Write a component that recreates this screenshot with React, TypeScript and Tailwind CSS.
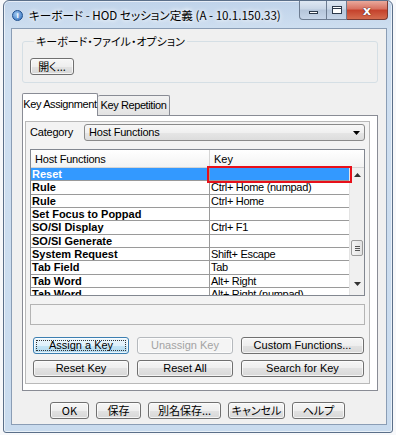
import React from "react";

const sans = "font-['Liberation_Sans','Noto_Sans_CJK_JP',sans-serif]";
const jp = "font-['Noto_Sans_CJK_JP',sans-serif] [font-feature-settings:'palt']";

function Btn({
  children,
  className = "",
  disabled,
  focused,
}: {
  children: React.ReactNode;
  className?: string;
  disabled?: boolean;
  focused?: boolean;
}) {
  const look = disabled
    ? "border-[#b5b9bd] bg-[#f4f4f4] text-[#a3a3a3]"
    : focused
    ? "border-[#3c7fb1] bg-[linear-gradient(#eaf6fd_0%,#dff1fb_50%,#c4e5f6_50%,#b2d9ef_100%)] text-black"
    : "border-[#707070] bg-[linear-gradient(#f6f6f6_0%,#eeeeee_50%,#e2e2e2_50%,#d8d8d8_100%)] text-black";
  return (
    <div
      className={`relative flex h-[17px] shrink-0 items-center justify-center whitespace-nowrap rounded-[3px] border text-[11px] leading-none shadow-[inset_0_0_0_1px_rgba(255,255,255,0.7)] ${look} ${className}`}
    >
      {focused && (
        <div className="absolute inset-[2px] border border-dotted border-[#333]" />
      )}
      <span className="relative">{children}</span>
    </div>
  );
}

const rows: [string, string][] = [
  ["Reset", ""],
  ["Rule", "Ctrl+ Home (numpad)"],
  ["Rule", "Ctrl+ Home"],
  ["Set Focus to Poppad", ""],
  ["SO/SI Display", "Ctrl+ F1"],
  ["SO/SI Generate", ""],
  ["System Request", "Shift+ Escape"],
  ["Tab Field", "Tab"],
  ["Tab Word", "Alt+ Right"],
  ["Tab Word", "Alt+ Right (numpad)"],
];

function TitleButtons() {
  return (
    <div className="flex h-[19px] items-stretch">
      <div className="flex w-[48px] overflow-hidden rounded-bl-[4px] border border-t-0 border-[#6d7c91] bg-[linear-gradient(#dfe8f3_0%,#c9d6e6_45%,#b5c5da_50%,#c6d5e8_100%)]">
        <div className="flex w-[27px] items-end justify-center border-r border-[#6d7c91] pb-[5px]">
          <div className="h-[3px] w-[9px] border border-[#2d3a4b] bg-white" />
        </div>
        <div className="flex flex-1 items-center justify-center">
          <div className="h-[8px] w-[10px] border border-[#2d3a4b] bg-white">
            <div className="mt-[1px] h-px bg-[#2d3a4b]" />
          </div>
        </div>
      </div>
      <div className="flex w-[41px] items-center justify-center rounded-br-[4px] border border-l-0 border-t-0 border-[#7a3b33] bg-[linear-gradient(#e9a99c_0%,#d7705f_45%,#c4412b_50%,#d46c4f_100%)]">
        <span className="text-[13px] font-bold leading-none text-white [text-shadow:0_0_1px_#401010,0_0_1px_#401010] font-['DejaVu_Sans',sans-serif]">
          x
        </span>
      </div>
    </div>
  );
}

export default function App() {
  return (
    <div className={`h-[435px] w-[396px] overflow-hidden bg-[#f7f8fa] ${sans}`}>
      <div className="ml-[3px] flex h-[433px] w-[390px] flex-col rounded-t-[6px] rounded-b-[3px] border border-[#5b6f89] bg-[linear-gradient(180deg,#c0d3ea_0px,#cfdff0_30px,#c9dbee_100%)] shadow-[inset_0_0_0_1px_rgba(255,255,255,0.6)]">
        {/* Title bar */}
        <div className="flex h-[27px] shrink-0 items-start">
          <div className="mt-[9px] ml-[8px] flex h-[11px] w-[11px] items-center justify-center rounded-full border border-[#1d4f8e] bg-[radial-gradient(circle_at_40%_35%,#9fc6ee,#2f6fc0)]">
            <span className="text-[8px] font-bold leading-none text-white">i</span>
          </div>
          <div
            className={`mt-[6px] ml-[6px] flex-1 whitespace-nowrap text-[11.6px] leading-[16px] text-black [text-shadow:0_0_6px_#fff,0_0_4px_#fff] ${jp}`}
          >
            キーボード - HOD セッション定義 (A - 10.1.150.33)
          </div>
          <div className="mr-[4px]">
            <TitleButtons />
          </div>
        </div>

        {/* Client area */}
        <div className="ml-[7px] flex h-[397px] w-[376px] flex-col border border-[#8a9db5] bg-[#f0f0f0] px-[10px] pt-[5px]">
          {/* Group box */}
          <fieldset className="h-[49px] w-[356px] rounded-[3px] border border-[#d5dfe5] px-[7px]">
            <legend className={`ml-[4px] px-[2px] text-[11px] leading-[14px] text-black ${jp}`}>
              キーボード・ファイル・オプション
            </legend>
            <div className="mt-[10px]">
              <Btn className={`w-[44px] ${jp}`}>開く...</Btn>
            </div>
          </fieldset>

          {/* Tabs */}
          <div className="mt-[10px] flex h-[22px] items-end">
            <div className="relative z-10 -mb-px flex h-[23px] w-[76px] items-start justify-center whitespace-nowrap rounded-t-[2px] border border-b-0 border-[#898c95] bg-white pt-[5px] text-[11px] leading-none tracking-[-0.4px]">
              Key Assignment
            </div>
            <div className="flex h-[20px] w-[72px] items-start justify-center whitespace-nowrap rounded-t-[2px] border border-b-0 border-l-0 border-[#898c95] bg-[linear-gradient(#f2f2f2,#e3e3e3)] pt-[4px] text-[11px] leading-none tracking-[-0.4px]">
              Key Repetition
            </div>
          </div>

          {/* Tab panel */}
          <div className="h-[276px] w-[356px] border border-[#898c95] bg-white pt-[5px] pr-[7px] pb-[6px] pl-[2px]">
            <div className="flex h-full flex-col border border-[#b9b9b9] bg-[#f3f3f3] pl-[4px]">
              {/* Category */}
              <div className="mt-[2px] flex h-[17px] items-center">
                <div className="w-[54px] text-[11px] tracking-[-0.2px]">Category</div>
                <div className="flex h-[17px] w-[281px] items-center justify-between rounded-[3px] border border-[#8a8a8a] bg-[linear-gradient(#f8f8f8_0%,#f0f0f0_50%,#e6e6e6_50%,#dddddd_100%)] pl-[4px] pr-[4px]">
                  <span className="text-[11px] leading-none tracking-[-0.2px]">Host Functions</span>
                  <svg width="7" height="4" viewBox="0 0 7 4">
                    <path d="M0 0H7L3.5 4Z" fill="#000" />
                  </svg>
                </div>
              </div>

              {/* List */}
              <div className="relative mt-[8px] h-[147px] w-[335px] overflow-hidden border border-[#828790] bg-white">
                {/* header */}
                <div className="flex h-[18px] border-b border-[#d5d5d5] bg-[linear-gradient(#ffffff,#f3f3f3)]">
                  <div className="w-[179px] border-r border-[#d5d5d5] pl-[4px] pt-[4px] text-[11px] leading-none tracking-[-0.2px]">
                    Host Functions
                  </div>
                  <div className="pl-[4px] pt-[4px] text-[11px] leading-none">Key</div>
                </div>
                <div className="flex">
                  <div className="w-[318px]">
                    {rows.map(([f, k], i) => {
                      const sel = i === 0;
                      return (
                        <div
                          key={i}
                          className={`flex h-[13.33px] border-b border-[#9a9a9a] text-[11px] leading-[12px] ${
                            sel ? "bg-[#3399ff] text-white" : "text-black"
                          }`}
                        >
                          <div className="w-[179px] whitespace-nowrap border-r border-[#9a9a9a] pl-[1px] font-bold">{f}</div>
                          <div className="flex-1 whitespace-nowrap pl-[1px] tracking-[-0.3px]">{k}</div>
                        </div>
                      );
                    })}
                  </div>
                  {/* scrollbar */}
                  <div className="relative h-[128px] w-[15px] border-l border-[#e3e3e3] bg-[#f0f0f0]">
                    <div className="flex h-[14px] items-center justify-center">
                      <svg width="7" height="4" viewBox="0 0 7 4">
                        <path d="M3.5 0L7 4H0Z" fill="#333" />
                      </svg>
                    </div>
                    <div className="mt-[58px] ml-[1px] flex h-[16px] w-[12px] flex-col items-center justify-center gap-[1px] rounded-[2px] border border-[#9b9b9b] bg-[linear-gradient(90deg,#f4f4f4,#e2e2e2)]">
                      <div className="h-px w-[5px] bg-[#555]" />
                      <div className="h-px w-[5px] bg-[#555]" />
                      <div className="h-px w-[5px] bg-[#555]" />
                    </div>
                    <div className="mt-[21px] flex h-[14px] items-center justify-center">
                      <svg width="7" height="4" viewBox="0 0 7 4">
                        <path d="M0 0H7L3.5 4Z" fill="#333" />
                      </svg>
                    </div>
                  </div>
                </div>
                {/* red highlight */}
                <div className="absolute top-[16px] left-[176px] h-[17px] w-[145px] border-2 border-[#e8101a]" />
              </div>

              {/* status box */}
              <div className="mt-[8px] h-[21px] w-[335px] border border-[#b4b4b4] bg-[#f4f4f4]" />

              {/* buttons */}
              <div className="mt-[12px] flex gap-[8px] pl-[3px]">
                <Btn focused className="w-[96px]">Assign a Key</Btn>
                <Btn disabled className="w-[96px]">Unassign Key</Btn>
                <Btn className="w-[123px]">Custom Functions...</Btn>
              </div>
              <div className="mt-[6px] flex gap-[8px] pl-[3px]">
                <Btn className="w-[96px]">Reset Key</Btn>
                <Btn className="w-[96px]">Reset All</Btn>
                <Btn className="w-[123px]">Search for Key</Btn>
              </div>
            </div>
          </div>

          {/* bottom buttons */}
          <div className={`mt-[11px] ml-[28px] flex gap-[7px] ${jp}`}>
            <Btn className="w-[39px]">OK</Btn>
            <Btn className="w-[45px]">保存</Btn>
            <Btn className="w-[73px]">別名保存...</Btn>
            <Btn className="w-[57px]">キャンセル</Btn>
            <Btn className="w-[53px]">ヘルプ</Btn>
          </div>
        </div>
      </div>
    </div>
  );
}
